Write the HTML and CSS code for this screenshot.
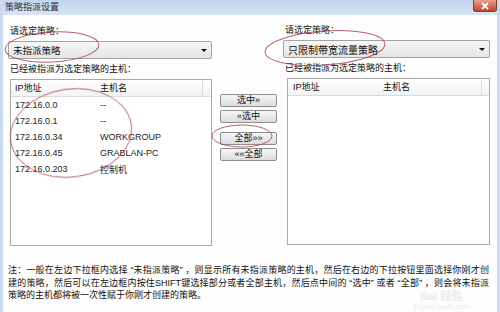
FILE: index.html
```html
<!DOCTYPE html>
<html>
<head>
<meta charset="utf-8">
<link rel="stylesheet" href="styles.css">
</head>
<body>
<div class="win">
  <div class="titlebar">
    <span class="title">策略指派设置</span>
    <span class="close"><svg width="10" height="8" viewBox="0 0 10 8"><path d="M2 1 L8 7 M8 1 L2 7" stroke="#fff" stroke-width="1.8"/></svg></span>
  </div>
  <div class="main">
    <div class="col col-left">
      <div class="label l1">请选定策略：</div>
      <div class="select"><span>未指派策略</span><span class="arrow"></span></div>
      <div class="label l2">已经被指派为选定策略的主机：</div>
      <div class="list">
        <div class="thead"><span class="c1">IP地址</span><span class="c2">主机名</span><span class="c3"></span></div>
        <div class="row"><span class="c1">172.16.0.0</span><span class="c2">--</span></div>
        <div class="row"><span class="c1">172.16.0.1</span><span class="c2">--</span></div>
        <div class="row"><span class="c1">172.16.0.34</span><span class="c2">WORKGROUP</span></div>
        <div class="row"><span class="c1">172.16.0.45</span><span class="c2">GRABLAN-PC</span></div>
        <div class="row"><span class="c1">172.16.0.203</span><span class="c2">控制机</span></div>
      </div>
    </div>
    <div class="col col-mid">
      <div class="btn">选中»</div>
      <div class="btn">«选中</div>
      <div class="btn b3">全部»»</div>
      <div class="btn">««全部</div>
    </div>
    <div class="col col-right">
      <div class="label l1 r">请选定策略：</div>
      <div class="select rs"><span>只限制带宽流量策略</span><span class="arrow"></span></div>
      <div class="label l2 r">已经被指派为选定策略的主机：</div>
      <div class="list rlist">
        <div class="thead"><span class="c1">IP地址</span><span class="c2">主机名</span><span class="c3"></span></div>
      </div>
    </div>
  </div>
  <div class="note">
    <span class="line just">注：一般在左边下拉框内选择 “未指派策略” ，则显示所有未指派策略的主机，然后在右边的下拉按钮里面选择你刚才创</span>
    <span class="line just">建的策略，然后可以在左边框内按住SHIFT键选择部分或者全部主机，然后点中间的 “选中” 或者 “全部” ，则会将未指派</span>
    <span class="line">策略的主机都将被一次性赋于你刚才创建的策略。</span>
  </div>
  <div class="wm"><span class="wm1">Bai 经验</span><span class="wm2">jingyan.baidu.com</span></div>
  <svg class="marks" width="500" height="312" viewBox="0 0 500 312">
    <g fill="none" stroke="#a8485a" stroke-width="1" opacity="0.85">
      <ellipse cx="52" cy="47" rx="47" ry="15" transform="rotate(-3 52 47)"/>
      <ellipse cx="325" cy="48" rx="60" ry="17" transform="rotate(-4 325 48)"/>
      <ellipse cx="71" cy="133" rx="61" ry="44" transform="rotate(-8 71 133)"/>
      <ellipse cx="242" cy="136" rx="30" ry="11"/>
    </g>
  </svg>
</div>
</body>
</html>
```
FILE: styles.css
```css
* { box-sizing: border-box; }
html, body { margin: 0; padding: 0; }
body { width: 500px; height: 312px; overflow: hidden; background: #fff; }
.win {
  position: relative;
  width: 500px; height: 312px;
  background: #fdfdfd;
  border-left: 3px solid #c9dbf0;
  border-right: 3px solid #c9dbf0;
  font-family: "Liberation Sans", "Noto Sans CJK SC", sans-serif;
  font-size: 9px;
  color: #111;
}
.titlebar {
  height: 15px;
  background: linear-gradient(#c2d5ed, #d7e4f3);
  display: flex; align-items: center; justify-content: space-between;
  padding-left: 2px;
}
.title { color: #1e2b3c; font-size: 9px; line-height: 15px; }
.close {
  width: 24px; height: 12px; margin-top: -3px; margin-right: 0px;
  background: linear-gradient(#e8a090, #c4432c);
  border: 1px solid #8a3a2c; border-top: none;
  border-radius: 0 0 3px 3px;
  display: flex; align-items: center; justify-content: center;
}
.main { display: flex; padding-left: 5px; height: 232px; }
.col-left { width: 205px; }
.col-mid { width: 70px; padding-left: 7px; padding-top: 79px; display: flex; flex-direction: column; }
.col-right { width: 207px; }
.label { line-height: 12px; padding-left: 2px; }
.l1 { margin-top: 10px; }
.l2 { margin-top: 4px; }
.col-right .l1 { margin-top: 9px; }
.select {
  height: 18px; width: 204px; margin-top: 4px;
  border: 1px solid #a3a3a3; border-radius: 2px;
  background: linear-gradient(#f7f7f7, #e5e5e5);
  display: flex; align-items: center; justify-content: space-between;
  padding: 0 4px 0 4px; font-size: 9.5px;
}
.rs { width: 207px; font-size: 10px; }
.arrow { width: 0; height: 0; border-left: 3px solid transparent; border-right: 3px solid transparent; border-top: 3px solid #111; }
.list {
  margin-left: 2px; margin-top: 4px; width: 202px; height: 167px;
  border: 1px solid #a9a9a9; background: #fff;
}
.rlist { margin-left: 4px; width: 203px; }
.thead {
  display: flex; height: 17px; align-items: center;
  background: linear-gradient(#ffffff, #f1f2f4);
  border-bottom: 1px solid #dcdcdc;
}
.c1 { width: 89px; padding-left: 4px; flex: none; }
.c2 { width: 103px; flex: none; }
.thead .c2 { border-right: 1px solid #dcdcdc; height: 17px; line-height: 17px; }
.thead .c1 { height: 17px; line-height: 17px; }
.rlist .c1 { width: 95px; padding-left: 5px; }
.rlist .c2 { width: 99px; }
.row { display: flex; height: 16px; align-items: center; color: #222; }
.btn {
  width: 57px; height: 13px;
  border: 1px solid #8e8e8e; border-radius: 2px;
  background: linear-gradient(#f6f6f6, #dcdcdc);
  text-align: center; line-height: 11px; font-size: 9px;
  margin-bottom: 3px;
}
.b3 { margin-top: 6px; }
.note { padding-left: 5px; padding-right: 8px; margin-top: 17px; }
.line { display: block; line-height: 12.5px; white-space: nowrap; }
.just { text-align: justify; text-align-last: justify; white-space: normal; }
.wm { position: absolute; left: 410px; top: 290px; color: #ebebeb; display: flex; flex-direction: column; align-items: center; }
.wm1 { font-size: 11px; font-weight: bold; line-height: 12px; }
.wm2 { font-size: 7px; line-height: 9px; }
.marks { position: absolute; left: -3px; top: 0; pointer-events: none; }
```
